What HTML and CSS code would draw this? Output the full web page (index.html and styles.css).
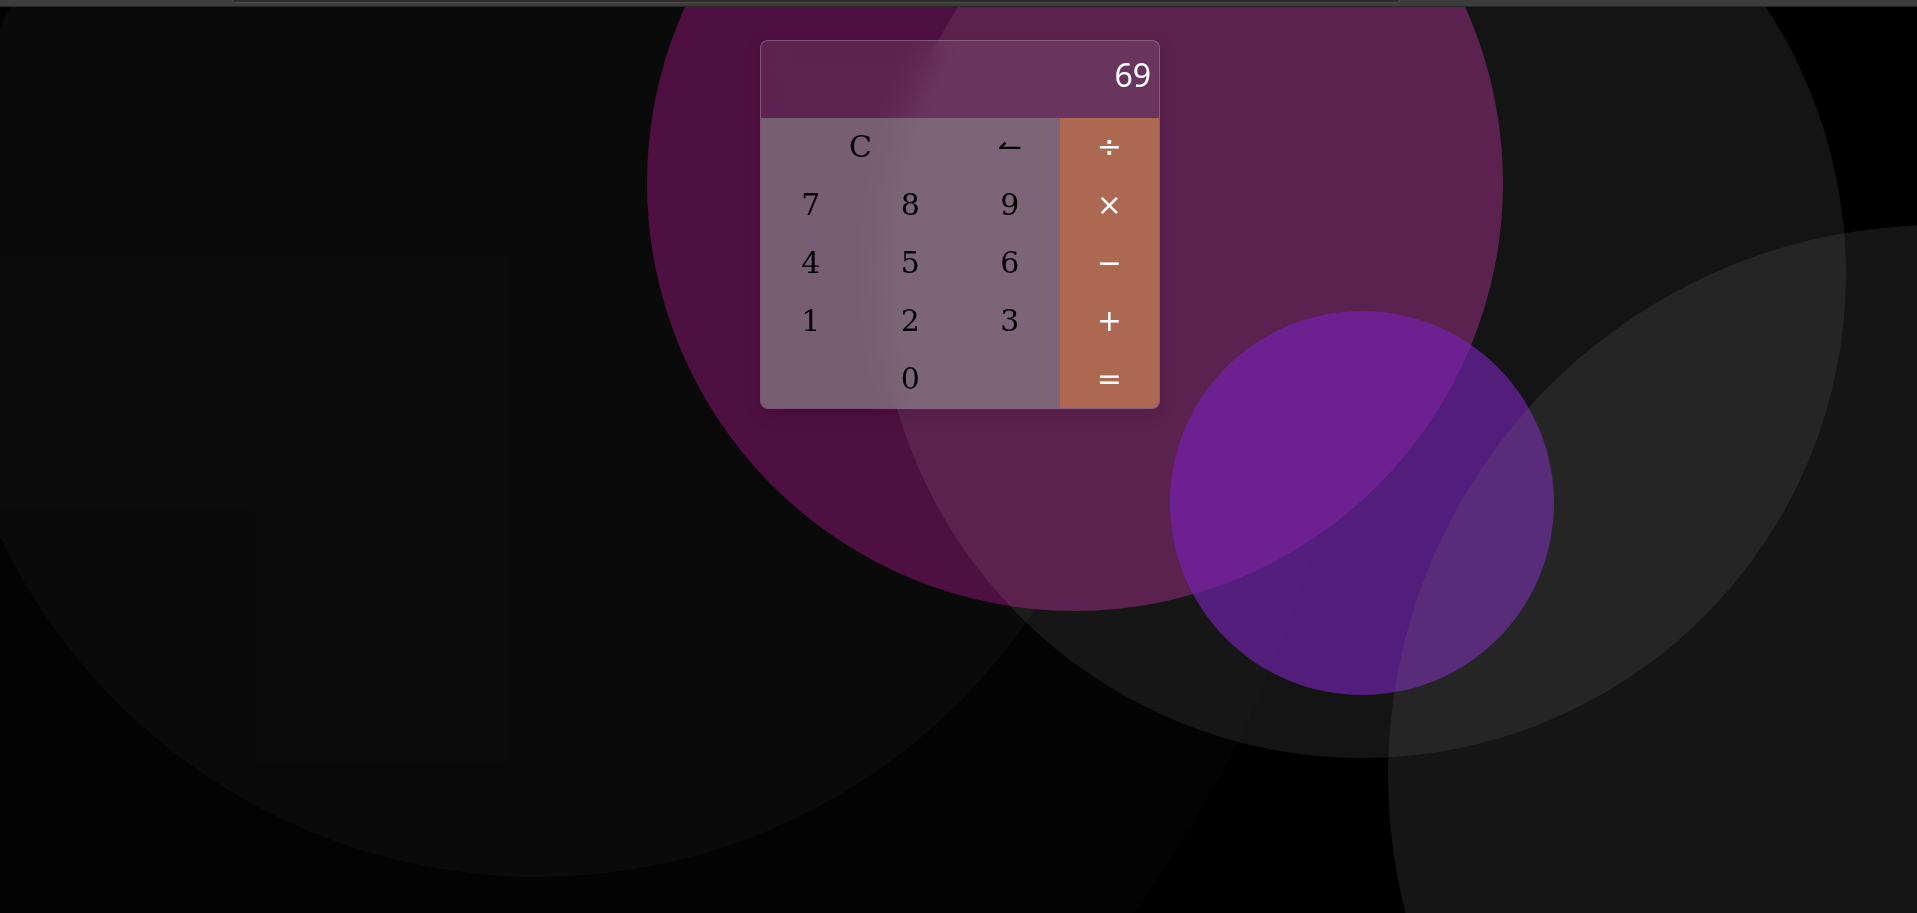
FILE: index.html
```html
<!DOCTYPE html>
<html lang="en">
<head>
<meta charset="utf-8">
<title>Calculator</title>
<link rel="stylesheet" href="styles.css">
</head>
<body>
<div class="bg" aria-hidden="true">
  <span class="circle c-f"></span>
  <span class="circle c-a"></span>
  <span class="circle c-c"></span>
  <span class="circle c-d"></span>
  <span class="circle c-b"></span>
  <span class="circle c-e"></span>
</div>
<div class="topbar"><div class="thumb"></div></div>
<main class="stage">
  <div class="calc">
    <div class="display">69</div>
    <div class="keys">
      <button class="key span2">C</button>
      <button class="key back">&#8636;</button>
      <button class="key op">&divide;</button>
      <button class="key">7</button>
      <button class="key">8</button>
      <button class="key">9</button>
      <button class="key op">&times;</button>
      <button class="key">4</button>
      <button class="key">5</button>
      <button class="key">6</button>
      <button class="key op">&minus;</button>
      <button class="key">1</button>
      <button class="key">2</button>
      <button class="key">3</button>
      <button class="key op">+</button>
      <button class="key span3">0</button>
      <button class="key op">=</button>
    </div>
  </div>
</main>
</body>
</html>
```

FILE: styles.css
```css
html, body {
  margin: 0;
  padding: 0;
  height: 100%;
}

body {
  background: #000;
  overflow: hidden;
  position: relative;
  font-family: "DejaVu Serif", serif;
}

/* decorative background bubbles */
.bg {
  position: absolute;
  inset: 0;
  overflow: hidden;
  z-index: 0;
}

.circle {
  position: absolute;
  border-radius: 50%;
  display: block;
}

.c-f {
  left: -1065px;
  top: -1015px;
  width: 2430px;
  height: 2430px;
  background: rgba(255, 255, 255, 0.012);
}

.c-a {
  left: -57px;
  top: -313px;
  width: 1190px;
  height: 1190px;
  background: rgba(255, 255, 255, 0.03);
}

.c-c {
  left: 647px;
  top: -245px;
  width: 856px;
  height: 856px;
  background: #4e1040;
}

.c-d {
  left: 1170px;
  top: 311px;
  width: 384px;
  height: 384px;
  background: rgba(108, 16, 176, 0.64);
}

.c-b {
  left: 878px;
  top: -210px;
  width: 968px;
  height: 968px;
  background: rgba(255, 255, 255, 0.08);
}

.c-e {
  left: 1388px;
  top: 225px;
  width: 1100px;
  height: 1100px;
  background: rgba(110, 110, 110, 0.19);
}

/* top strip */
.topbar {
  position: relative;
  z-index: 2;
  height: 6px;
  background: #3c3c3c;
  border-bottom: 1px solid #262626;
}

.thumb {
  margin-left: 232px;
  width: 1166px;
  height: 2px;
  background: #2b2b2b;
  border: 1px solid #4c4c4c;
  border-top: none;
  border-radius: 0 0 3px 3px;
}

/* calculator */
.stage {
  position: relative;
  z-index: 1;
  padding: 33px 0 0 760px;
}

.calc {
  width: 400px;
  box-sizing: border-box;
  border: 1px solid rgba(255, 255, 255, 0.22);
  border-radius: 8px;
  overflow: hidden;
  background: rgba(255, 255, 255, 0.085);
  backdrop-filter: blur(14px);
  -webkit-backdrop-filter: blur(14px);
  box-shadow: 0 6px 18px rgba(0, 0, 0, 0.12);
}

.display {
  height: 77px;
  box-sizing: border-box;
  display: flex;
  align-items: center;
  justify-content: flex-end;
  padding: 0 8px 10px 0;
  color: #fff;
  font-family: "Noto Sans", "Open Sans", sans-serif;
  font-size: 32px;
}

.keys {
  display: grid;
  grid-template-columns: repeat(4, 1fr);
  grid-auto-rows: 58px;
}

.key {
  margin: 0;
  padding: 0;
  border: none;
  background: rgba(140, 140, 140, 0.56);
  color: #000;
  font-family: "DejaVu Serif", serif;
  font-size: 30px;
  line-height: 58px;
  cursor: pointer;
}

.key.back {
  font-family: "DejaVu Sans", sans-serif;
  font-size: 29px;
}

.key.op {
  background: rgba(190, 118, 80, 0.8);
  color: #fff;
  font-family: "DejaVu Sans", sans-serif;
  font-size: 30px;
}

.span2 {
  grid-column: span 2;
}

.span3 {
  grid-column: span 3;
}
```
